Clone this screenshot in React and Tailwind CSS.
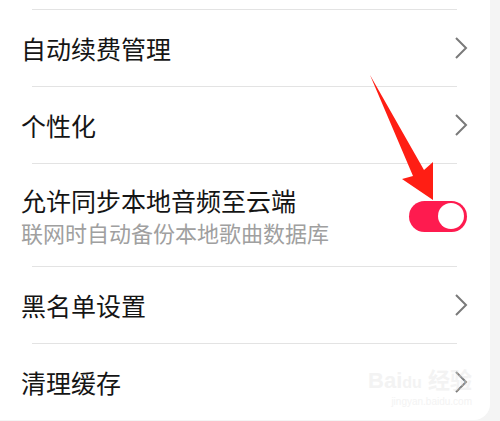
const font = { fontFamily: '"Noto Sans CJK SC", "Noto Sans", sans-serif' };

function Divider() {
  return <div className="ml-[32px] w-[425px] h-px bg-[#e3e3e3]" />;
}

function Chevron() {
  return (
    <svg width="14" height="24" viewBox="0 0 14 24" className="shrink-0">
      <path d="M2 2 L12 12 L2 22" fill="none" stroke="#7a7a7a" strokeWidth="2" />
    </svg>
  );
}

function Row({ title }) {
  return (
    <div className="h-[76px] flex items-center justify-between pl-[21px] pr-[22px]">
      <span className="text-[25px] leading-none text-[#151515]">{title}</span>
      <Chevron />
    </div>
  );
}

export default function App() {
  return (
    <div className="relative w-[500px] h-[421px] bg-[#f4f4f4] overflow-hidden" style={font}>
      <div className="w-[490px] h-[420px] bg-white rounded-br-2xl">
        <div className="h-[9px]" />
        <Divider />
        <Row title="自动续费管理" />
        <Divider />
        <Row title="个性化" />
        <Divider />
        <div className="h-[102px] flex items-center justify-between pl-[21px] pr-[23px]">
          <div className="flex flex-col">
            <span className="text-[25px] leading-none text-[#151515]">允许同步本地音频至云端</span>
            <span className="mt-[8px] text-[22px] leading-none text-[#a0a0a0]">联网时自动备份本地歌曲数据库</span>
          </div>
          <div className="w-[58px] h-[31px] rounded-full bg-[#fe1b4f] flex items-center justify-end pr-[3px] mt-[2px]">
            <div className="w-[26px] h-[26px] rounded-full bg-white" />
          </div>
        </div>
        <Divider />
        <Row title="黑名单设置" />
        <Divider />
        <Row title="清理缓存" />
      </div>

      {/* annotation arrow */}
      <svg className="absolute left-0 top-0 pointer-events-none" width="500" height="421">
        <polygon points="370,75 424,170 433,162 433,200 402,179 413,176" fill="#ff1e14" />
      </svg>

      {/* watermark */}
      <div className="absolute right-[28px] bottom-[14px] flex flex-col items-end pointer-events-none opacity-40">
        <span className="text-[22px] leading-none font-bold text-[#e2e2e2]" style={{ fontFamily: '"Liberation Sans", sans-serif' }}>
          Bai<span className="text-[16px]">du</span> <span style={font}>经验</span>
        </span>
        <span className="text-[10px] leading-none text-[#e2e2e2] mt-[5px]" style={{ fontFamily: '"Liberation Sans", sans-serif' }}>
          jingyan.baidu.com
        </span>
      </div>
    </div>
  );
}
